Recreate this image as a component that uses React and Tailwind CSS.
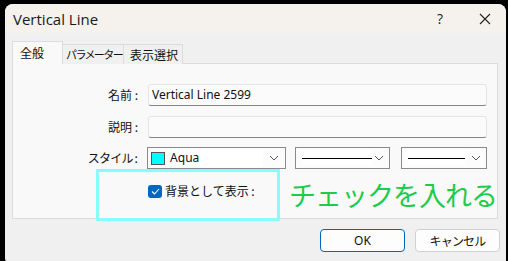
import React from "react";

function Chevron() {
  return (
    <svg width="10" height="6" viewBox="0 0 10 6" className="shrink-0">
      <path d="M1 1 L5 5 L9 1" fill="none" stroke="#555" strokeWidth="1" />
    </svg>
  );
}

export default function App() {
  return (
    <div className="w-[508px] h-[261px] bg-black relative overflow-hidden whitespace-nowrap font-['Noto_Sans','Noto_Sans_CJK_JP',sans-serif]">
      <div className="absolute left-[5px] top-[4px] w-[501px] h-[260px] bg-[#f0f0f0] rounded-t-[8px] rounded-bl-[6px] flex flex-col overflow-hidden">
        {/* title bar */}
        <div className="h-[29px] bg-[#f5f1ec] flex items-center pl-[8px] shrink-0">
          <span className="text-[15px] font-normal text-[#1a1a1a] leading-none mt-[1px] font-['Open_Sans','Noto_Sans',sans-serif]">Vertical Line</span>
          <span className="ml-auto text-[14px] text-[#222] leading-none mr-[36px] font-['Open_Sans',sans-serif]">?</span>
          <svg width="12" height="12" viewBox="0 0 12 12" className="mr-[15px]">
            <path d="M1 1 L11 11 M11 1 L1 11" stroke="#222" strokeWidth="1.1" />
          </svg>
        </div>
        {/* tabs */}
        <div className="pl-[7px] pr-[8px] pt-[9px] flex flex-col">
          <div className="flex items-end h-[22px] relative z-10">
            <div className="w-[51px] h-[23px] bg-[#f9f9f9] border border-[#dcdcdc] border-b-0 text-[12px] text-[#111] flex items-start pl-[7px] pt-[2px] font-['Noto_Sans_CJK_JP',sans-serif]">全般</div>
            <div className="w-[61px] h-[20px] bg-[#f0f0f0] border border-[#dcdcdc] border-l-0 border-b-0 text-[11px] text-[#111] flex items-center pl-[3px] tracking-[-1.6px] overflow-hidden font-['Noto_Sans_CJK_JP',sans-serif]">パラメーター</div>
            <div className="w-[59px] h-[20px] bg-[#f0f0f0] border border-[#dcdcdc] border-l-0 border-b-0 text-[12px] text-[#111] flex items-center pl-[6px] font-['Noto_Sans_CJK_JP',sans-serif]">表示選択</div>
          </div>
          {/* panel */}
          <div className="h-[156px] bg-[#f9f9f9] border border-[#dcdcdc] -mt-[1px] flex flex-col pt-[20px] pr-[10px]">
            <div className="flex items-center h-[22px]">
              <div className="w-[126px] text-right text-[12px] text-[#111] pr-[1px] font-['Noto_Sans_CJK_JP',sans-serif]">名前 :</div>
              <div className="ml-[9px] flex-1 h-[22px] bg-[#fbfbfb] border border-[#e5e5e5] border-b-[#868686] rounded-[3px] text-[12px] text-[#111] flex items-center pl-[3px] font-['Noto_Sans',sans-serif]">Vertical Line 2599</div>
            </div>
            <div className="flex items-center h-[22px] mt-[10px]">
              <div className="w-[126px] text-right text-[12px] text-[#111] pr-[1px] font-['Noto_Sans_CJK_JP',sans-serif]">説明 :</div>
              <div className="ml-[9px] flex-1 h-[22px] bg-[#fbfbfb] border border-[#e5e5e5] border-b-[#868686] rounded-[3px]"></div>
            </div>
            <div className="flex items-center h-[22px] mt-[9px]">
              <div className="w-[126px] text-right text-[12px] text-[#111] pr-[1px] tracking-[-0.8px] font-['Noto_Sans_CJK_JP',sans-serif]">スタイル :</div>
              <div className="ml-[9px] w-[140px] h-[22px] bg-[#fcfcfc] border border-[#8a8a8a] flex items-center pl-[3px] pr-[6px]">
                <div className="w-[14px] h-[13px] bg-[#00ffff] border border-[#555]"></div>
                <div className="ml-[3px] w-[95px] h-[18px] bg-white text-[12px] text-[#111] flex items-center pl-[2px] font-['Noto_Sans',sans-serif]">Aqua</div>
                <div className="ml-auto"><Chevron /></div>
              </div>
              <div className="ml-[9px] w-[95px] h-[22px] bg-[#fcfcfc] border border-[#8a8a8a] flex items-center pl-[6px] pr-[5px]">
                <div className="w-[70px] h-[16px] bg-white flex items-center"><div className="w-full h-[1px] bg-black"></div></div>
                <div className="ml-auto"><Chevron /></div>
              </div>
              <div className="ml-[11px] w-[87px] h-[22px] bg-[#fcfcfc] border border-[#8a8a8a] flex items-center pl-[6px] pr-[5px]">
                <div className="w-[57px] h-[16px] bg-white flex items-center"><div className="w-full h-[1px] bg-black"></div></div>
                <div className="ml-auto"><Chevron /></div>
              </div>
            </div>
            <div className="flex items-center h-[14px] mt-[15px] pl-[135px]">
              <div className="w-[14px] h-[13px] bg-[#0067c0] rounded-[3px] flex items-center justify-center">
                <svg width="9" height="7" viewBox="0 0 9 7"><path d="M1 3.5 L3.5 6 L8 1" fill="none" stroke="white" strokeWidth="1.1" /></svg>
              </div>
              <span className="ml-[3px] text-[12px] text-[#111] font-['Noto_Sans_CJK_JP',sans-serif]">背景として表示 :</span>
            </div>
          </div>
        </div>
        {/* buttons */}
        <div className="flex justify-end gap-[10px] pr-[6px] mt-[10px]">
          <div className="w-[85px] h-[23px] bg-[#fdfdfd] border border-[#0067c0] rounded-[4px] text-[12px] text-[#111] flex items-center justify-center font-['Noto_Sans',sans-serif]">OK</div>
          <div className="w-[85px] h-[23px] bg-[#fdfdfd] border border-[#d0d0d0] rounded-[4px] text-[12px] text-[#111] flex items-center justify-center tracking-[-0.8px] font-['Noto_Sans_CJK_JP',sans-serif]">キャンセル</div>
        </div>
      </div>
      {/* annotation overlay */}
      <div className="absolute left-[96px] top-[169px] w-[184px] h-[52px] border-[3px] border-[#88fcf8]"></div>
      <div className="absolute left-[289px] top-[177px] text-[27px] leading-[36px] text-[#1ecb4c] tracking-[-1px] font-['Noto_Sans_CJK_JP',sans-serif]">チェックを入れる</div>
    </div>
  );
}
